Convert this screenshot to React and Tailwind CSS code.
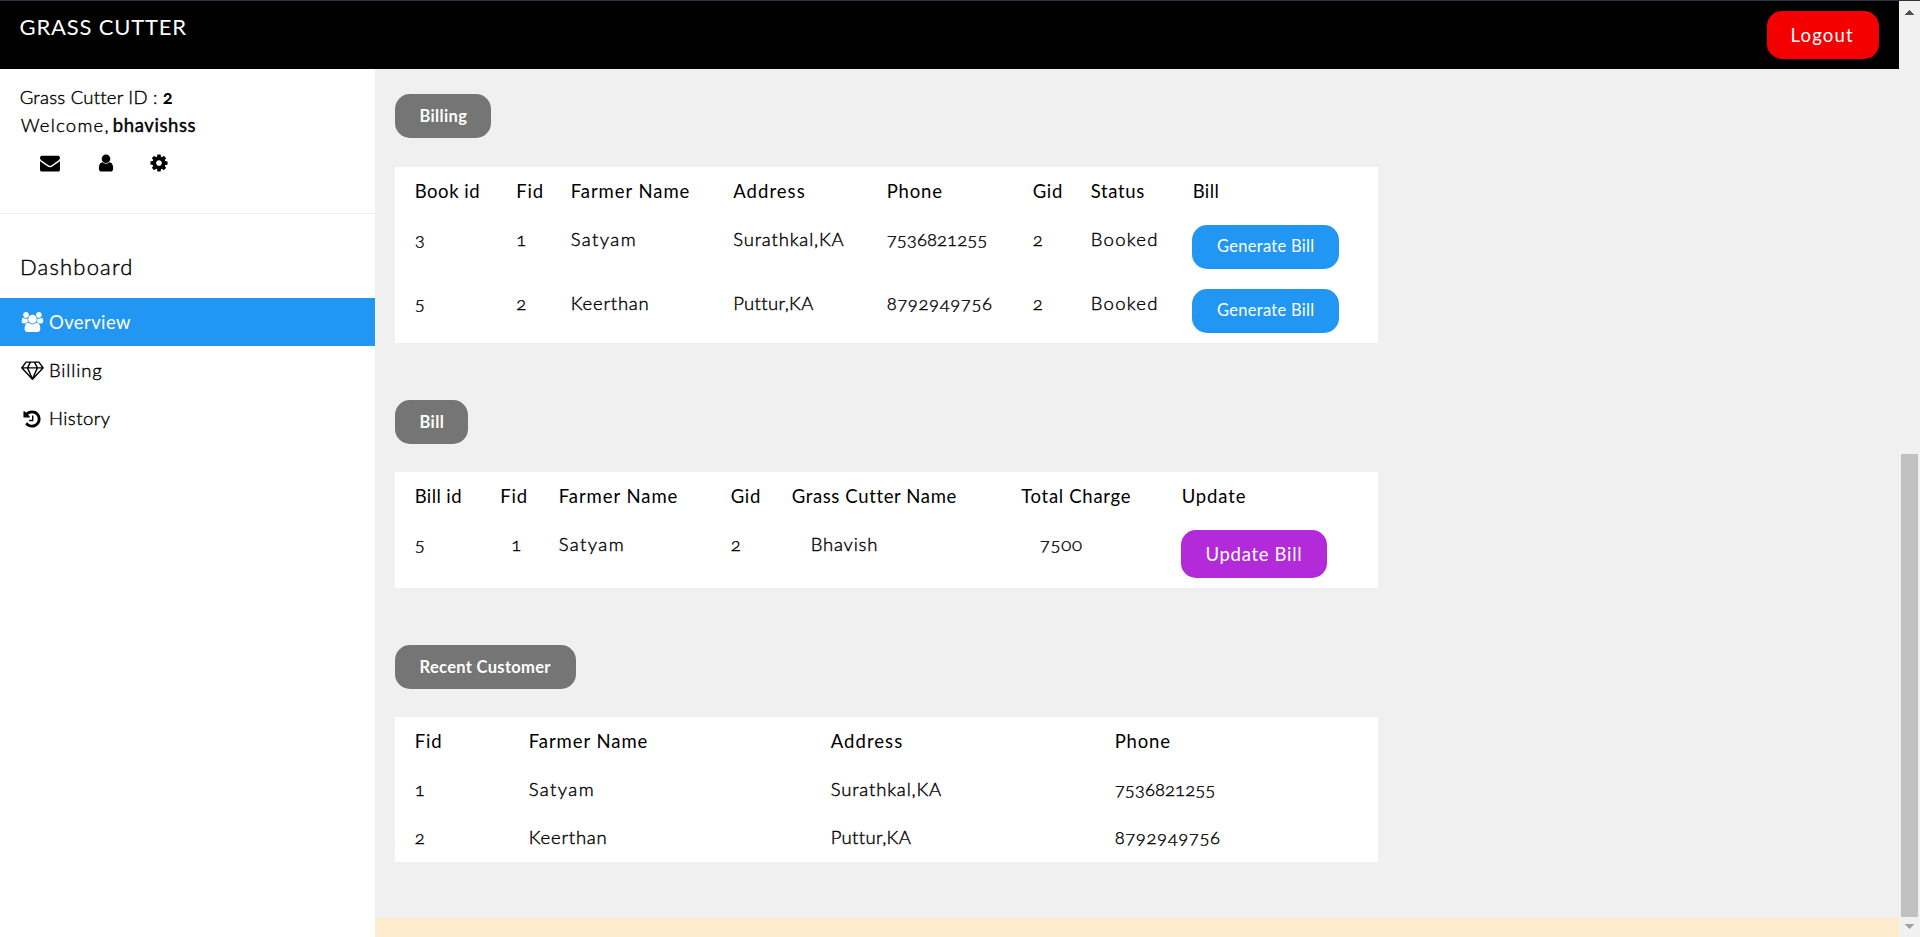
import clsx from "clsx";

const LIGHT = "font-light [-webkit-text-stroke:0.4px]";

const TRACKING = {
  "Book id": "tracking-[0.55px]",
  Fid: "tracking-[0.9px]",
  "Farmer Name": "tracking-[0.95px]",
  Address: "tracking-[1.05px]",
  Phone: "tracking-[0.85px]",
  Gid: "tracking-[0.7px]",
  Status: "tracking-[0.65px]",
  Bill: "tracking-[0.4px]",
  "Bill id": "tracking-[0.4px]",
  "Grass Cutter Name": "tracking-[0.63px]",
  "Total Charge": "tracking-[0.7px]",
  Update: "tracking-[0.85px]",
  Satyam: "tracking-[1.4px]",
  Keerthan: "tracking-[0.8px]",
  "Surathkal,KA": "tracking-[0.83px]",
  "Puttur,KA": "tracking-[0.35px]",
  7536821255: "tracking-[0.08px]",
  8792949756: "tracking-[0.6px]",
  Booked: "tracking-[1.3px]",
  Bhavish: "tracking-[0.8px]",
  7500: "tracking-[0.8px]",
};

function EnvelopeIcon({ className }) {
  return (
    <svg viewBox="0 0 1792 1792" className={className} fill="currentColor">
      <path d="M1792 710v794q0 66-47 113t-113 47h-1472q-66 0-113-47t-47-113v-794q44 49 101 87 362 246 497 345 57 42 92.5 65.5t94.5 48 110 24.5h2q51 0 110-24.5t94.5-48 92.5-65.5q170-123 498-345 57-39 100-87zm0-294q0 79-49 151t-122 123q-376 261-468 325-10 7-42.5 31t-54 38.5-52 32.5-57.5 27-50 9h-2q-23 0-50-9t-57.5-27-52-32.5-54-38.5-42.5-31q-91-64-262-182.5t-205-142.5q-62-42-117-115.5t-55-136.5q0-78 41.5-130t118.5-52h1472q65 0 112.5 47t47.5 113z" />
    </svg>
  );
}

function UserIcon({ className }) {
  return (
    <svg viewBox="0 0 1792 1792" className={className} fill="currentColor">
      <path d="M1536 1399q0 109-62.5 187t-150.5 78h-854q-88 0-150.5-78t-62.5-187q0-85 8.5-160.5t31.5-152 58.5-131 94-89 134.5-34.5q131 128 313 128t313-128q76 0 134.5 34.5t94 89 58.5 131 31.5 152 8.5 160.5zm-256-887q0 159-112.5 271.5t-271.5 112.5-271.5-112.5-112.5-271.5 112.5-271.5 271.5-112.5 271.5 112.5 112.5 271.5z" />
    </svg>
  );
}

function CogIcon({ className }) {
  return (
    <svg viewBox="0 0 1792 1792" className={className} fill="currentColor">
      <path d="M1152 896q0-106-75-181t-181-75-181 75-75 181 75 181 181 75 181-75 75-181zm512-109v222q0 12-8 23t-20 13l-185 28q-19 54-39 91 35 50 107 138 10 12 10 25t-9 23q-27 37-99 108t-94 71q-12 0-26-9l-138-108q-44 23-91 38-16 136-29 186-7 28-36 28h-222q-14 0-24.5-8.5t-11.5-21.5l-28-184q-49-16-90-37l-141 107q-10 9-25 9-14 0-25-11-126-114-165-168-7-10-7-23 0-12 8-23 15-21 51-66.5t54-70.5q-27-50-41-99l-183-27q-13-2-21-12.5t-8-23.5v-222q0-12 8-23t19-13l186-28q14-46 39-92-40-57-107-138-10-12-10-24 0-10 9-23 26-36 98.5-107.5t94.5-71.5q13 0 26 10l138 107q44-23 91-38 16-136 29-186 7-28 36-28h222q14 0 24.5 8.5t11.5 21.5l28 184q49 16 90 37l142-107q9-9 24-9 13 0 25 10 129 119 165 170 7 8 7 22 0 12-8 23-15 21-51 66.5t-54 70.5q26 50 41 98l183 28q13 2 21 12.5t8 23.5z" />
    </svg>
  );
}

function UsersIcon({ className }) {
  return (
    <svg viewBox="0 0 2048 1792" className={className} fill="currentColor">
      <path d="M657 896q-162 5-265 128h-134q-82 0-138-40.5t-56-118.5q0-353 124-353 6 0 43.5 21t97.5 42.5 119 21.5q67 0 133-23-5 37-5 66 0 139 81 256zm1071 637q0 120-73 189.5t-194 69.5h-874q-121 0-194-69.5t-73-189.5q0-53 3.5-103.5t14-109 26.5-108.5 43-97.5 62-81 85.5-53.5 111.5-20q10 0 43 21.5t73 48 107 48 135 21.5 135-21.5 107-48 73-48 43-21.5q61 0 111.5 20t85.5 53.5 62 81 43 97.5 26.5 108.5 14 109 3.5 103.5zm-1024-1277q0 106-75 181t-181 75-181-75-75-181 75-181 181-75 181 75 75 181zm704 384q0 159-112.5 271.5t-271.5 112.5-271.5-112.5-112.5-271.5 112.5-271.5 271.5-112.5 271.5 112.5 112.5 271.5zm576 225q0 78-56 118.5t-138 40.5h-134q-103-123-265-128 81-117 81-256 0-29-5-66 66 23 133 23 59 0 119-21.5t97.5-42.5 43.5-21q124 0 124 353zm-128-609q0 106-75 181t-181 75-181-75-75-181 75-181 181-75 181 75 75 181z" />
    </svg>
  );
}

function DiamondIcon({ className }) {
  return (
    <svg viewBox="0 0 2048 1792" className={className} fill="currentColor">
      <path
        fillRule="evenodd"
        d="M1651 154l384 512q14 18 13 41.5t-17 40.5l-960 1024q-18 20-47 20t-47-20l-960-1024q-16-17-17-40.5t13-41.5l384-512q18-26 51-26h1152q33 0 51 26zM212 768l623 665-300-665zM1024 1540l349-772h-698zM538 640l204-384h-262l-288 384zM1213 1433l623-665h-323zM683 640h682l-204-384h-274zM1510 640h346l-288-384h-262z"
      />
    </svg>
  );
}

function HistoryIcon({ className }) {
  return (
    <svg viewBox="0 0 1792 1792" className={className} fill="currentColor">
      <path d="M1664 896q0 156-61 298t-164 245-245 164-298 61q-172 0-327-72.5t-264-204.5q-7-10-6.5-22.5t8.5-20.5l137-138q10-9 25-9 16 2 23 12 73 95 179 147t225 52q104 0 198.5-40.5t163.5-109.5 109.5-163.5 40.5-198.5-40.5-198.5-109.5-163.5-163.5-109.5-198.5-40.5q-98 0-188 35.5t-160 101.5l137 138q31 30 14 69-17 40-59 40h-448q-26 0-45-19t-19-45v-448q0-42 40-59 39-17 69 14l130 129q107-101 244.5-156.5t284.5-55.5q156 0 298 61t245 164 164 245 61 298zm-640-288v448q0 14-9 23t-23 9h-320q-14 0-23-9t-9-23v-64q0-14 9-23t23-9h224v-352q0-14 9-23t23-9h64q14 0 23 9t9 23z" />
    </svg>
  );
}

function Pill({ children, className }) {
  return (
    <div
      className={clsx(
        "flex h-11 items-center rounded-[15px] bg-[#757575] pl-[24.5px] text-[16.5px] font-bold text-white",
        className,
      )}
    >
      {children}
    </div>
  );
}

function Row({ grid, height, header, cells, indents = [], action }) {
  return (
    <div className={clsx("grid pl-[19.7px] leading-8", grid, height)}>
      {cells.map((text, i) => (
        <div
          key={i}
          className={clsx("pt-2", header ? "font-normal" : LIGHT, TRACKING[text], indents[i])}
        >
          {text}
        </div>
      ))}
      {action && <div className="-ml-[0.7px] pt-[9.6px]">{action}</div>}
    </div>
  );
}

const GenerateBill = () => (
  <button className="flex h-11 w-[147px] items-center rounded-[15px] bg-[#2196f3] pb-px pl-[25px] text-[16.5px] tracking-[0.3px] text-white">
    Generate Bill
  </button>
);

const UpdateBill = () => (
  <button className="flex h-12 w-[146px] items-center rounded-[15px] bg-[#b22ad9] pl-[24.5px] tracking-[0.7px] text-white">
    Update Bill
  </button>
);

const BILLING_GRID = "grid-cols-[101.5px_54.5px_162.5px_153.5px_146px_58px_102px_1fr]";
const BILL_GRID = "grid-cols-[85.5px_58.5px_172px_61px_229.5px_160.5px_1fr]";
const CUSTOMER_GRID = "grid-cols-[114px_302px_284px_1fr]";

function NavItem({ icon: Icon, iconClass, label, labelClass, active }) {
  return (
    <a
      className={clsx(
        "flex h-12 items-center",
        active ? "bg-[#2196f3] text-white" : "text-black",
      )}
    >
      <span className="flex w-[49px] shrink-0">
        <Icon className={iconClass} />
      </span>
      <span className={clsx("pt-px", active ? "font-normal" : LIGHT, labelClass)}>{label}</span>
    </a>
  );
}

export default function App() {
  return (
    <div className="flex h-[937px] w-[1920px] flex-col overflow-hidden border-t border-[#2f3241] bg-[#f0f0f0] font-['Lato','Liberation_Sans',sans-serif] text-[18.5px] text-black [font-variant-numeric:oldstyle-nums]">
      <div className="flex min-h-0 flex-1">
        <div className="flex w-[1899px] flex-col">
          <header className="flex h-[68px] shrink-0 items-start justify-between bg-black pr-5 pl-[19.5px] text-white">
            <span className="pt-[9px] text-[22px] leading-[33px] tracking-[0.82px]">
              GRASS CUTTER
            </span>
            <button className="mt-2.5 flex h-12 w-28 items-center rounded-[15px] bg-[#f40000] pt-px pl-[23.5px] tracking-[1.2px]">
              Logout
            </button>
          </header>

          <div className="flex min-h-0 flex-1">
            <aside className="flex w-[375px] shrink-0 flex-col bg-white">
              <div className="flex h-[145px] flex-col border-b border-[#eeeeee] pt-[14px] pl-[19.7px] leading-7">
                <div className="flex gap-[5px]">
                  <span className={clsx("tracking-[0.25px]", LIGHT)}>Grass Cutter ID :</span>
                  <span className="font-bold">2</span>
                </div>
                <div className="flex gap-[3px] pl-px">
                  <span className={clsx("tracking-[1.25px]", LIGHT)}>Welcome,</span>
                  <span className="font-normal tracking-[0.6px] [-webkit-text-stroke:0.4px]">bhavishss</span>
                </div>
                <div className="flex pt-[14px] pl-[20.3px]">
                  <EnvelopeIcon className="size-5" />
                  <UserIcon className="ml-9 size-5" />
                  <CogIcon className="ml-[33.5px] size-5" />
                </div>
              </div>

              <h5 className={clsx("h-[84px] pt-[35.5px] pl-5 text-[22px] leading-[33px] tracking-[1.2px]", LIGHT)}>
                Dashboard
              </h5>
              <nav className="flex flex-col">
                <NavItem
                  icon={UsersIcon}
                  iconClass="ml-[21.3px] h-5 w-[22.9px]"
                  label="Overview"
                  labelClass="tracking-[0.4px]"
                  active
                />
                <NavItem
                  icon={DiamondIcon}
                  iconClass="ml-[21.3px] h-5 w-[22.9px]"
                  label="Billing"
                  labelClass="tracking-[0.85px]"
                />
                <NavItem
                  icon={HistoryIcon}
                  iconClass="ml-[22.3px] mt-px size-5"
                  label="History"
                  labelClass="tracking-[0.45px]"
                />
              </nav>
            </aside>

            <main className="flex flex-1 flex-col">
              <div className="flex flex-1 flex-col pt-[25px] pl-5">
                <Pill className="w-24 tracking-[0.35px]">Billing</Pill>
                <section className="mt-[29px] w-[983px] bg-white">
                  <Row
                    grid={BILLING_GRID}
                    height="h-[48.4px]"
                    header
                    cells={["Book id", "Fid", "Farmer Name", "Address", "Phone", "Gid", "Status", "Bill"]}
                  />
                  <Row
                    grid={BILLING_GRID}
                    height="h-16"
                    cells={["3", "1", "Satyam", "Surathkal,KA", "7536821255", "2", "Booked"]}
                    action={<GenerateBill />}
                  />
                  <Row
                    grid={BILLING_GRID}
                    height="h-16"
                    cells={["5", "2", "Keerthan", "Puttur,KA", "8792949756", "2", "Booked"]}
                    action={<GenerateBill />}
                  />
                </section>

                <Pill className="mt-[56.6px] w-[73px] tracking-[0.4px]">Bill</Pill>
                <section className="mt-7 w-[983px] bg-white">
                  <Row
                    grid={BILL_GRID}
                    height="h-[48.4px]"
                    header
                    cells={["Bill id", "Fid", "Farmer Name", "Gid", "Grass Cutter Name", "Total Charge", "Update"]}
                  />
                  <Row
                    grid={BILL_GRID}
                    height="h-[67.6px]"
                    cells={["5", "1", "Satyam", "2", "Bhavish", "7500"]}
                    indents={["", "pl-[11px]", "", "", "pl-[19px]", "pl-[18.5px]"]}
                    action={<UpdateBill />}
                  />
                </section>

                <Pill className="mt-[57px] w-[181px] tracking-[0.32px]">Recent Customer</Pill>
                <section className="mt-7 w-[983px] bg-white">
                  <Row
                    grid={CUSTOMER_GRID}
                    height="h-[48.4px]"
                    header
                    cells={["Fid", "Farmer Name", "Address", "Phone"]}
                  />
                  <Row
                    grid={CUSTOMER_GRID}
                    height="h-12"
                    cells={["1", "Satyam", "Surathkal,KA", "7536821255"]}
                  />
                  <Row
                    grid={CUSTOMER_GRID}
                    height="h-[48.8px]"
                    cells={["2", "Keerthan", "Puttur,KA", "8792949756"]}
                  />
                </section>
              </div>
              <div className="h-[19px] shrink-0 bg-[#ffebcd]" />
            </main>
          </div>
        </div>

        <div className="flex w-[21px] flex-col items-center bg-[#f1f1f1] pt-[9px] pb-2">
          <svg viewBox="0 0 9 5" className="h-[5px] w-[9px]" fill="#505050" shapeRendering="crispEdges">
            <path d="M0 5L4.5 0L9 5z" />
          </svg>
          <div className="mt-[439px] w-[17px] flex-1 bg-[#c1c1c1]" />
          <svg viewBox="0 0 9 5" className="mt-[7px] h-[5px] w-[9px]" fill="#a3a3a3" shapeRendering="crispEdges">
            <path d="M0 0L4.5 5L9 0z" />
          </svg>
        </div>
      </div>
    </div>
  );
}
